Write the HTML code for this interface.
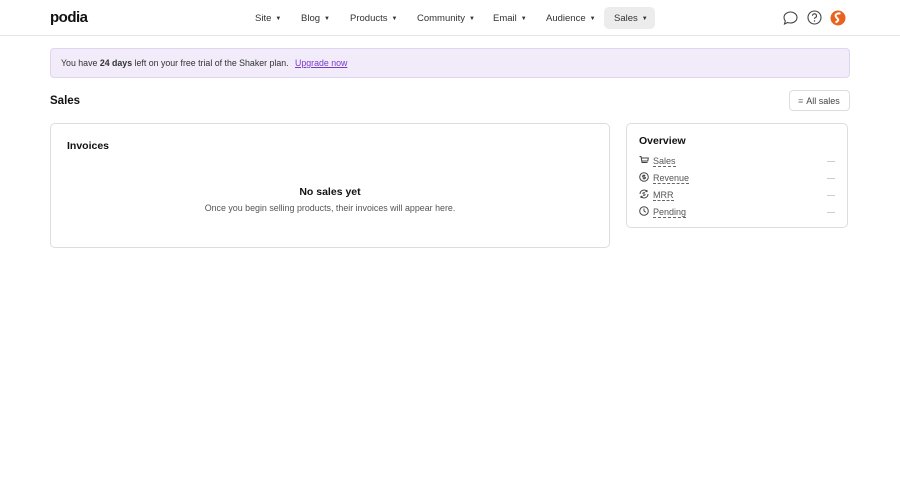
<!DOCTYPE html>
<html><head><meta charset="utf-8"><style>
*{box-sizing:border-box;margin:0;padding:0}
body{width:900px;height:484px;background:#fff;font-family:"Liberation Sans",sans-serif;color:#222;position:relative;overflow:hidden}
.hdr{position:absolute;left:0;top:0;width:900px;height:36px;border-bottom:1px solid #e5e5e5}
.logo{position:absolute;left:50px;top:9px;font-weight:bold;font-size:15px;letter-spacing:-0.5px;color:#111}
.nav{position:absolute;top:7px;font-size:9.5px;color:#333;height:22px;line-height:23px}
.nav span{font-size:6px;margin-left:4px;vertical-align:1px}
.sel{background:#ececec;border-radius:5px;padding:0 10px}
.banner{position:absolute;left:50px;top:48px;width:800px;height:30px;background:#f1ebfa;border:1px solid #e0d5f0;border-radius:4px;font-size:8.8px;line-height:28px;padding-left:10px;color:#333}
.banner a{color:#7a3bc9;text-decoration:underline;margin-left:4px}
h1{position:absolute;left:50px;top:95px;font-size:11.5px;font-weight:bold;color:#111}
.btn{position:absolute;left:789px;top:90px;width:61px;height:21px;border:1px solid #ddd;border-radius:4px;font-size:9px;line-height:20px;color:#444;padding-left:8px}
.card{position:absolute;border:1px solid #ddd;border-radius:5px;background:#fff}
.t{font-size:10.5px;font-weight:bold;color:#111;position:absolute}
.row{position:absolute;left:12px;font-size:9px;color:#555;height:12px;line-height:12px}
.row u{text-decoration:none;border-bottom:1px dashed #666}
.row svg{margin-right:4px;vertical-align:-1px}
.dash{position:absolute;right:0;top:6px;width:8px;border-top:1px solid #ccc}
</style></head><body>
<div class="hdr">
<div class="logo">podia</div>
<div class="nav" style="left:255px">Site<span>▼</span></div>
<div class="nav" style="left:301px">Blog<span>▼</span></div>
<div class="nav" style="left:350px">Products<span>▼</span></div>
<div class="nav" style="left:417px">Community<span>▼</span></div>
<div class="nav" style="left:493px">Email<span>▼</span></div>
<div class="nav" style="left:546px">Audience<span>▼</span></div>
<div class="nav sel" style="left:604px;width:51px">Sales<span>▼</span></div>
<svg style="position:absolute;left:783px;top:11px" width="15" height="14" viewBox="0 0 15 14"><path d="M7.5 1C11 1 14 3.4 14 6.5S11 12 7.5 12c-1 0-2-.2-2.8-.5L1.5 13l.8-3C1.5 9 1 7.8 1 6.5 1 3.4 4 1 7.5 1z" fill="none" stroke="#444" stroke-width="1.1"/></svg>
<svg style="position:absolute;left:807px;top:10px" width="15" height="15" viewBox="0 0 15 15"><circle cx="7.5" cy="7.5" r="6.5" fill="none" stroke="#444" stroke-width="1.1"/><path d="M5.5 5.8a2 2 0 1 1 2.6 1.9c-.5.2-.6.6-.6 1.2" fill="none" stroke="#444" stroke-width="1.1"/><circle cx="7.5" cy="11" r=".7" fill="#444"/></svg>
<svg style="position:absolute;left:830px;top:10px" width="16" height="16" viewBox="0 0 16 16"><circle cx="8" cy="8" r="7.5" fill="#e8641e"/><path d="M10.5 3.5C7 3 4 5 6.5 7.5S9 10.5 5.5 12.5" fill="none" stroke="#fff" stroke-width="2"/></svg>
</div>
<div class="banner">You have <b>24 days</b> left on your free trial of the Shaker plan. <a>Upgrade now</a></div>
<h1>Sales</h1>
<div class="btn"><span style="color:#888;margin-right:3px">≡</span>All sales</div>
<div class="card" style="left:50px;top:123px;width:560px;height:125px">
<div class="t" style="left:16px;top:16px">Invoices</div>
<div style="position:absolute;left:0;width:100%;top:62px;text-align:center;font-size:10.5px;font-weight:bold;color:#111">No sales yet</div>
<div style="position:absolute;left:0;width:100%;top:79px;text-align:center;font-size:8.9px;color:#555">Once you begin selling products, their invoices will appear here.</div>
</div>
<div class="card" style="left:626px;top:123px;width:222px;height:105px">
<div class="t" style="left:12px;top:11px">Overview</div>
<div class="row" style="top:31px;width:196px"><svg width="10" height="10" viewBox="0 0 10 10"><path d="M.5 1.5h1.5l1 6h5.5M2.3 3h7l-.5 3H3" fill="none" stroke="#444" stroke-width="1"/></svg><u>Sales</u><div class="dash"></div></div>
<div class="row" style="top:48px;width:196px"><svg width="10" height="10" viewBox="0 0 10 10"><circle cx="5" cy="5" r="4.3" fill="none" stroke="#444" stroke-width="1"/><path d="M6.3 3.5H4.3a.8.8 0 0 0 0 1.6h1.4a.8.8 0 0 1 0 1.6H3.7M5 2.5v5" fill="none" stroke="#444" stroke-width=".9"/></svg><u>Revenue</u><div class="dash"></div></div>
<div class="row" style="top:65px;width:196px"><svg width="10" height="10" viewBox="0 0 10 10"><path d="M1 5a4 4 0 0 1 7-2.6M9 5a4 4 0 0 1-7 2.6M8 1v1.6H6.4M2 9V7.4h1.6" fill="none" stroke="#444" stroke-width="1"/><path d="M6 3.7H4.5a.6.6 0 0 0 0 1.3h1a.6.6 0 0 1 0 1.3H4" fill="none" stroke="#444" stroke-width=".8"/></svg><u>MRR</u><div class="dash"></div></div>
<div class="row" style="top:82px;width:196px"><svg width="10" height="10" viewBox="0 0 10 10"><circle cx="5" cy="5" r="4.3" fill="none" stroke="#444" stroke-width="1"/><path d="M5 2.5V5l1.8 1.2" fill="none" stroke="#444" stroke-width="1"/></svg><u>Pending</u><div class="dash"></div></div>
</div>
</body></html>
